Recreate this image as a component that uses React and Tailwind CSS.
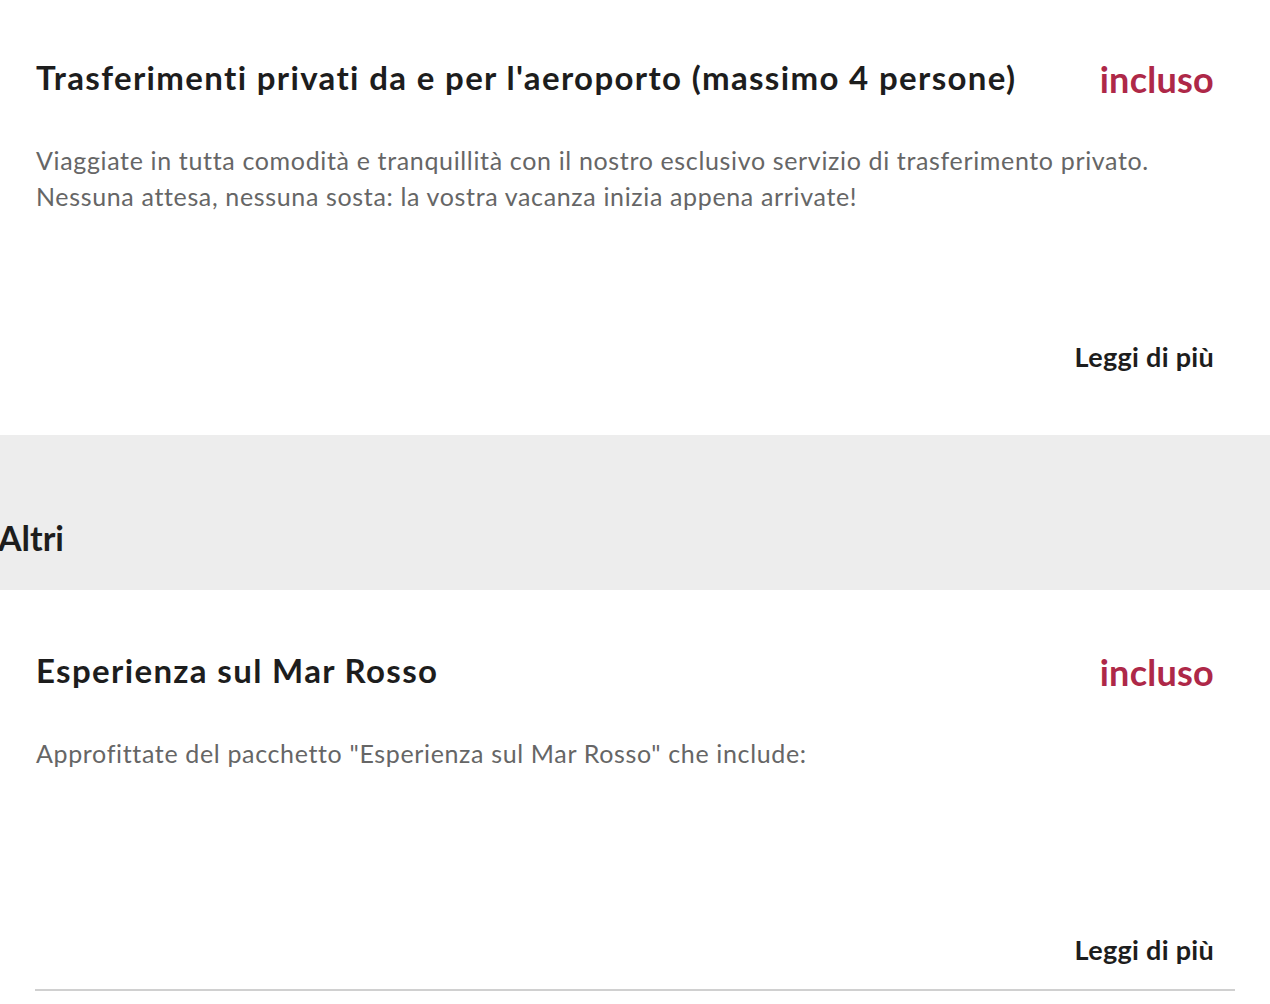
const font = { fontFamily: 'Lato, "Open Sans", sans-serif' };

function Item({ title, text }) {
  return (
    <div className="px-[36px] pr-[56px]">
      <div className="flex items-start justify-between pt-[56px]">
        <h3 className="text-[33px] font-bold leading-[42px] tracking-[1.35px] text-[#1d1d1d]">{title}</h3>
        <span className="text-[36px] font-bold leading-[46px] tracking-[0.25px] text-[#ae2848]">incluso</span>
      </div>
      <div className="mt-[40px] h-[197px] text-[25px] leading-[36px] tracking-[0.65px] text-[#666666]">
        {text}
      </div>
      <div className="flex justify-end">
        <a className="text-[27px] font-bold leading-[36px] tracking-[0.3px] text-[#1d1d1d]">Leggi di più</a>
      </div>
    </div>
  );
}

export default function App() {
  return (
    <div className="min-h-screen w-[1270px] overflow-hidden bg-white" style={font}>
      <Item
        title="Trasferimenti privati da e per l'aeroporto (massimo 4 persone)"
        text={
          <>
            Viaggiate in tutta comodità e tranquillità con il nostro esclusivo servizio di trasferimento privato.
            <br />
            Nessuna attesa, nessuna sosta: la vostra vacanza inizia appena arrivate!
          </>
        }
      />
      <div className="mt-[60px] flex h-[155px] items-end bg-[#ededed] pb-[30px]">
        <h2 className="ml-[-2px] text-[34px] font-bold leading-[44px] text-[#1d1d1d]">Altri</h2>
      </div>
      <div className="mx-[35px] border-b-2 border-[#d0d0d0] pt-[3px] pb-[21px]">
        <div className="-mx-[35px]">
          <Item title="Esperienza sul Mar Rosso" text={<>Approfittate del pacchetto "Esperienza sul Mar Rosso" che include:</>} />
        </div>
      </div>
    </div>
  );
}
